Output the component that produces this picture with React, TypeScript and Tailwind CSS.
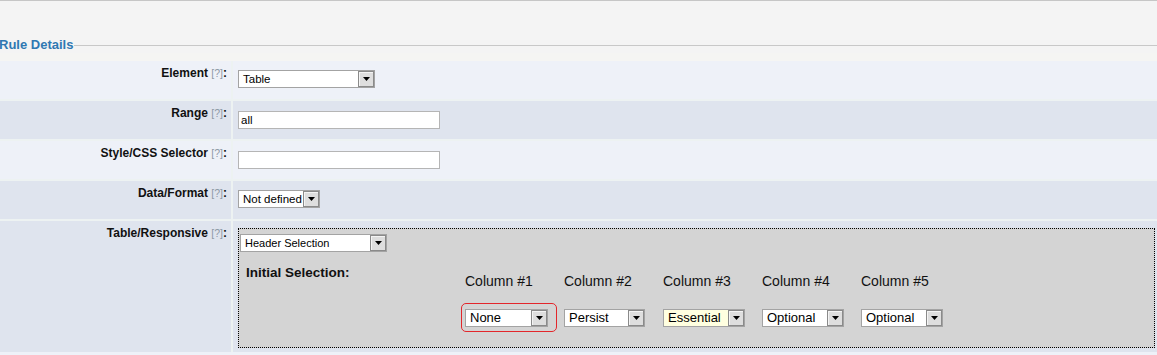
import React from "react";

function Arrow() {
  return (
    <span className="flex h-full w-[16px] shrink-0 items-center justify-center border border-[#8a8a8a] bg-[#dedede] shadow-[inset_1px_1px_0_#f4f4f4]">
      <svg width="7" height="4" viewBox="0 0 7 4" aria-hidden="true">
        <path d="M0 0h7L3.5 4z" fill="#000" />
      </svg>
    </span>
  );
}

type SelectProps = { label: string; width: string; text: string; bg?: string };

function Select({ label, width, text, bg = "bg-white" }: SelectProps) {
  return (
    <div className={`flex h-[18px] items-stretch border border-[#a3a3a3] ${width} ${bg}`}>
      <span className={`flex-1 overflow-hidden whitespace-nowrap pl-[4px] leading-[16px] text-black ${text}`}>{label}</span>
      <Arrow />
    </div>
  );
}

function Row({ name, light, children, tall }: { name: string; light: boolean; children: React.ReactNode; tall?: boolean }) {
  const bg = light ? "bg-[#eef1f8]" : "bg-[#dfe4ee]";
  return (
    <div className={`flex gap-[2px] ${tall ? "h-[131px]" : "h-[38px]"}`}>
      <div className={`w-[231px] shrink-0 pr-[4px] pt-[5px] text-right text-[12px] font-bold leading-[15px] text-[#111] ${bg}`}>
        {name} <span className="text-[10.5px] font-normal text-[#8d99a6]">[?]</span>:
      </div>
      <div className={`flex-1 pl-[5px] pr-[2px] ${tall ? "pt-[7px]" : "pt-[9px]"} ${bg}`}>{children}</div>
    </div>
  );
}

const columns = [
  { title: "Column #1", value: "None", w: "w-[83px]", bg: "bg-white", mark: true },
  { title: "Column #2", value: "Persist", w: "w-[81px]", bg: "bg-white" },
  { title: "Column #3", value: "Essential", w: "w-[82px]", bg: "bg-[#ffffe0]" },
  { title: "Column #4", value: "Optional", w: "w-[82px]", bg: "bg-white" },
  { title: "Column #5", value: "Optional", w: "w-[82px]", bg: "bg-white" },
];

export default function App() {
  return (
    <div className="h-[355px] w-[1157px] overflow-hidden bg-[#f4f4f4] font-['Liberation_Sans',Arial,sans-serif]">
      <div className="h-px bg-[#c6c6c6]" />
      <div className="h-[36px]" />
      {/* legend */}
      <div className="flex h-[16px] items-center">
        <span className="-ml-px whitespace-nowrap text-[13px] font-bold leading-[16px] text-[#2f78b2]">Rule Details</span>
        <div className="ml-px h-px flex-1 bg-[#c8c8c8]" />
      </div>
      <div className="h-[8px] bg-[#f5f5f3]" />

      <div className="flex flex-col gap-[2px] bg-[#edf2f2]">
        <Row name="Element" light>
          <Select label="Table" width="w-[137px]" text="text-[11.5px]" />
        </Row>
        <Row name="Range" light={false}>
          <input
            readOnly
            value="all"
            className="mt-px block h-[18px] w-[202px] border border-[#b5b5b5] bg-white px-[2px] text-[11.5px] text-black outline-none"
          />
        </Row>
        <Row name="Style/CSS Selector" light>
          <input
            readOnly
            value=""
            className="mt-px block h-[18px] w-[202px] border border-[#b5b5b5] bg-white px-[2px] text-[11.5px] text-black outline-none"
          />
        </Row>
        <Row name="Data/Format" light={false}>
          <Select label="Not defined" width="w-[82px]" text="text-[11.5px]" />
        </Row>
        <Row name="Table/Responsive" light={false} tall>
          <div className="h-[120px] border border-dotted border-black bg-[#d4d4d4] pl-px pt-[5px]">
            <Select label="Header Selection" width="w-[147px]" text="text-[11px]" />
            <div className="flex">
              <div className="w-[222px] shrink-0 pl-[6px] pt-[13px] text-[13.5px] font-bold leading-[16px] text-[#111]">
                Initial Selection:
              </div>
              <div className="flex">
                {columns.map((c) => (
                  <div key={c.title} className="relative w-[99px] pl-[3px]">
                    <div className="pt-[21px] text-[14px] leading-[16px] text-[#111]">{c.title}</div>
                    <div className="mt-[20px]">
                      <Select label={c.value} width={c.w} text="text-[13px]" bg={c.bg} />
                    </div>
                    {c.mark && (
                      <div className="pointer-events-none absolute left-[-1px] top-[51px] h-[29px] w-[96px] rounded-[5px] border border-[#e3262b]" />
                    )}
                  </div>
                ))}
              </div>
            </div>
          </div>
        </Row>
      </div>
      <div className="h-[4px] bg-[#eef1f8]" />
    </div>
  );
}
